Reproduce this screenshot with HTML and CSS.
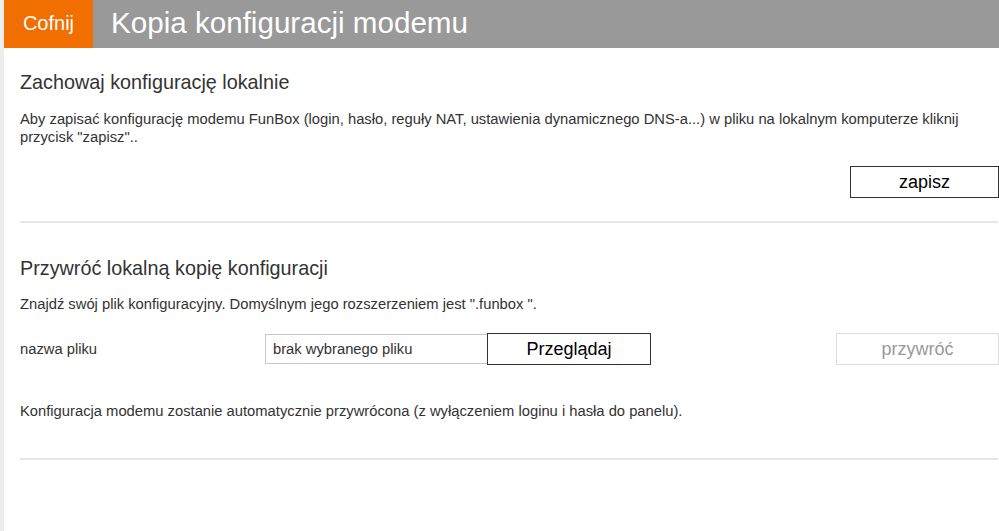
FILE: index.html
```html
<!DOCTYPE html>
<html lang="pl">
<head>
<meta charset="utf-8">
<title>Kopia konfiguracji modemu</title>
<link rel="stylesheet" href="styles.css">
</head>
<body>
<div class="page">
  <header class="topbar">
    <a class="back" href="#">Cofnij</a>
    <h1 class="title">Kopia konfiguracji modemu</h1>
  </header>
  <main class="content">
    <section class="section">
      <h2 class="heading">Zachowaj konfigurację lokalnie</h2>
      <p class="text">Aby zapisać konfigurację modemu FunBox (login, hasło, reguły NAT, ustawienia dynamicznego DNS-a...) w pliku na lokalnym komputerze kliknij przycisk "zapisz"..</p>
      <div class="actions">
        <button class="btn" type="button">zapisz</button>
      </div>
    </section>
    <section class="section second">
      <h2 class="heading">Przywróć lokalną kopię konfiguracji</h2>
      <p class="text">Znajdź swój plik konfiguracyjny. Domyślnym jego rozszerzeniem jest ".funbox ".</p>
      <div class="file-row">
        <span class="label">nazwa pliku</span>
        <div class="file-field">
          <span class="file-name">brak wybranego pliku</span>
          <button class="btn browse" type="button">Przeglądaj</button>
        </div>
        <button class="btn disabled" type="button" disabled>przywróć</button>
      </div>
      <p class="text note">Konfiguracja modemu zostanie automatycznie przywrócona (z wyłączeniem loginu i hasła do panelu).</p>
    </section>
  </main>
</div>
</body>
</html>
```
FILE: styles.css
```css
html, body {
  margin: 0;
  padding: 0;
  background: #ffffff;
}
body {
  font-family: "Liberation Sans", Arial, sans-serif;
  color: #333333;
}
.page {
  border-left: 4px solid #ededed;
  min-height: 531px;
  box-sizing: border-box;
}
.topbar {
  display: flex;
  height: 48px;
  background: #999999;
}
.back {
  display: flex;
  align-items: center;
  justify-content: center;
  width: 89px;
  background: #f16e00;
  color: #ffffff;
  font-size: 20px;
  text-decoration: none;
  padding-bottom: 2px;
  box-sizing: border-box;
}
.title {
  margin: 0;
  padding-left: 18px;
  display: flex;
  align-items: center;
  font-size: 29.6px;
  font-weight: normal;
  color: #ffffff;
  line-height: 1;
  padding-bottom: 2px;
}
.content {
  padding: 0 1px 0 16px;
}
.section {
  border-bottom: 2px solid #e6e6e6;
}
.heading {
  margin: 0;
  padding-top: 22px;
  font-size: 19.8px;
  font-weight: normal;
  line-height: 24px;
  color: #333333;
}
.text {
  margin: 16px 0 0;
  font-size: 14.75px;
  line-height: 18px;
  color: #333333;
}
.actions {
  display: flex;
  justify-content: flex-end;
  margin-top: 20px;
  padding-bottom: 23px;
  margin-right: -1px;
}
.btn {
  font-family: "Liberation Sans", Arial, sans-serif;
  font-size: 18px;
  color: #000000;
  background: #ffffff;
  border: 1px solid #333333;
  height: 32px;
  width: 149px;
  padding: 0;
  cursor: pointer;
}
.second .heading {
  padding-top: 33px;
}
.second .text {
  margin-top: 15px;
}
.file-row {
  display: flex;
  align-items: center;
  margin-top: 20px;
  margin-right: -1px;
}
.label {
  width: 245px;
  font-size: 14.75px;
  color: #333333;
}
.file-field {
  display: flex;
  align-items: center;
}
.file-name {
  box-sizing: border-box;
  width: 222px;
  height: 30px;
  border: 1px solid #c8c8c8;
  border-right: none;
  padding-left: 7px;
  display: flex;
  align-items: center;
  font-size: 14.75px;
  color: #333333;
}
.browse {
  width: 164px;
}
.disabled {
  margin-left: auto;
  width: 163px;
  color: #999999;
  border-color: #dddddd;
  cursor: default;
}
.second .note {
  margin-top: 37px;
  padding-bottom: 38px;
}
```
